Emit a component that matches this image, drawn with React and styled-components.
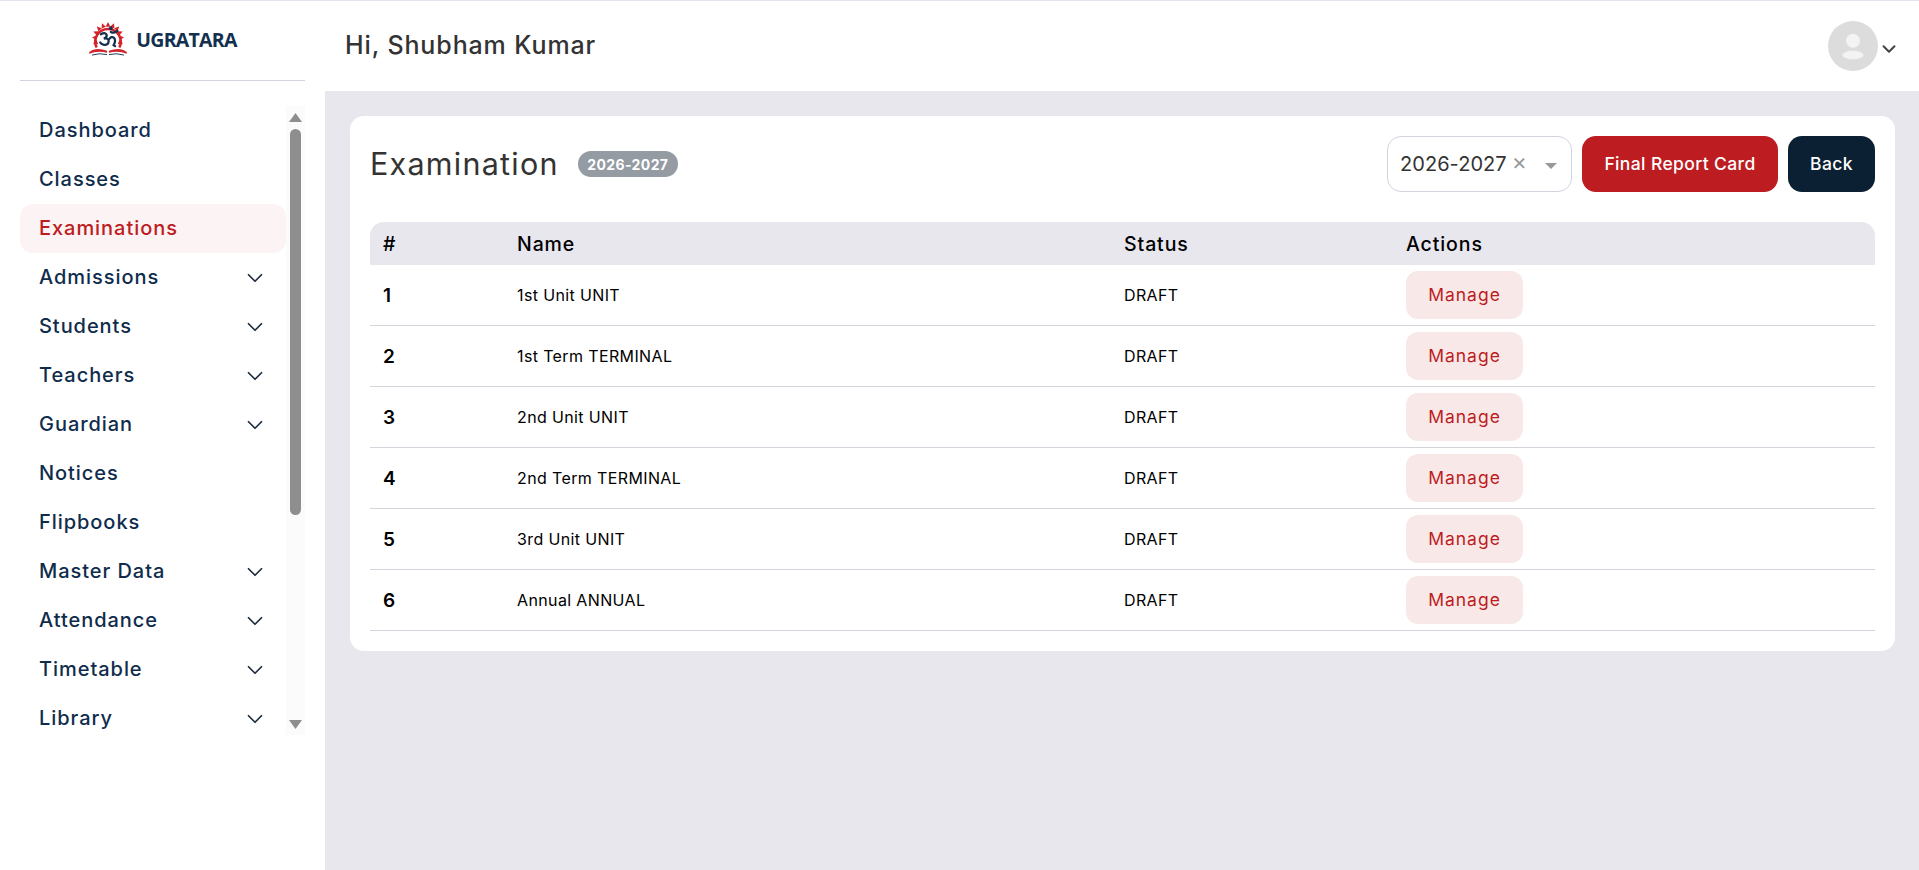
import React from "react";
import styled, { createGlobalStyle } from "styled-components";
import { ChevronDown } from "lucide-react";

const FONT = `"Inter", "Liberation Sans", sans-serif`;

const Global = createGlobalStyle`
  html, body { margin: 0; padding: 0; height: 100%; background: #e8e7ee; }
  * { box-sizing: border-box; }
  body { font-family: ${FONT}; overflow: hidden; }
  #root { height: 100%; }
`;

const Page = styled.div`
  display: flex;
  height: 870px;
  width: 1919px;
  border-top: 1px solid #e3e5ee;
`;

const Sidebar = styled.aside`
  width: 325px;
  flex: none;
  background: #fff;
  padding: 0 20px;
  display: flex;
  flex-direction: column;
`;

const Brand = styled.div`
  height: 80px;
  border-bottom: 1px solid #d3d3e0;
  display: flex;
  align-items: center;
  justify-content: center;
  gap: 8px;
  padding-bottom: 3px;
  flex: none;
`;

const BrandName = styled.span`
  font-family: "Open Sans", sans-serif;
  font-weight: 700;
  font-size: 19.5px;
  letter-spacing: -0.75px;
  color: #14304f;
`;

const NavWrap = styled.div`
  margin-top: 25px;
  height: 629px;
  display: flex;
  flex: none;
`;

const Nav = styled.nav`
  width: 266px;
  flex: none;
  overflow: hidden;
`;

const NavItem = styled.div`
  height: 49px;
  display: flex;
  align-items: center;
  justify-content: space-between;
  padding: 0 18px 2px 19px;
  border-radius: 13px;
  font-size: 20px;
  font-weight: 500;
  letter-spacing: 0.95px;
  color: ${(p) => (p.$active ? "#bd1c21" : "#0f2c4c")};
  background: ${(p) => (p.$active ? "#fcf3f4" : "transparent")};
  svg { color: #1d2c3e; margin-top: 2px; }
`;

const Scrollbar = styled.div`
  width: 19px;
  flex: none;
  background: #fbfbfb;
  display: flex;
  flex-direction: column;
  align-items: center;
`;

const ScrollArrow = styled.svg`
  width: 13px;
  height: 9px;
  flex: none;
  margin: ${(p) => p.$margin};
  fill: #8e8e8e;
`;

const ScrollThumb = styled.div`
  width: 11px;
  height: 386px;
  background: #8e8e8e;
  border-radius: 6px;
  flex: none;
`;

const Main = styled.div`
  flex: 1;
  min-width: 0;
  display: flex;
  flex-direction: column;
`;

const Header = styled.header`
  height: 90px;
  flex: none;
  background: #fff;
  display: flex;
  align-items: center;
  justify-content: space-between;
  padding: 0 19px 0 20px;
`;

const Greeting = styled.h2`
  margin: 0;
  font-size: 25px;
  font-weight: 500;
  letter-spacing: 0.88px;
  color: #333;
  padding-bottom: 2px;
`;

const UserMenu = styled.div`
  display: flex;
  align-items: center;
  color: #444;
  svg:last-child { margin-top: 5px; }
`;

const Content = styled.main`
  flex: 1;
  padding: 25px 24px 25px 25px;
`;

const Card = styled.section`
  background: #fff;
  border-radius: 14px;
  padding: 20px;
`;

const CardTop = styled.div`
  display: flex;
  align-items: center;
  justify-content: space-between;
  height: 56px;
  margin-bottom: 30px;
`;

const TitleGroup = styled.div`
  display: flex;
  align-items: center;
  gap: 19px;
`;

const Title = styled.h1`
  margin: 0;
  font-size: 30.5px;
  font-weight: 400;
  letter-spacing: 1.25px;
  color: #333;
  padding-bottom: 2px;
`;

const Badge = styled.span`
  display: inline-flex;
  align-items: center;
  justify-content: center;
  width: 100px;
  height: 26px;
  border-radius: 13px;
  background: #949ba3;
  color: #fff;
  font-size: 14px;
  font-weight: 700;
  letter-spacing: 0.4px;
`;

const Actions = styled.div`
  display: flex;
  align-items: center;
  gap: 10px;
`;

const YearSelect = styled.div`
  width: 185px;
  height: 56px;
  border: 1px solid #d3d3e0;
  border-radius: 14px;
  display: flex;
  align-items: center;
  padding: 0 14px 0 12px;
  font-size: 20px;
  letter-spacing: 0.05px;
  color: #333;
`;

const ClearMark = styled.span`
  margin-left: 5px;
  color: #999;
  font-size: 23px;
  line-height: 1;
  padding-bottom: 3px;
`;

const Caret = styled.span`
  margin-left: auto;
  width: 0;
  height: 0;
  border-left: 6px solid transparent;
  border-right: 6px solid transparent;
  border-top: 6px solid #999;
  margin-top: 3px;
`;

const Button = styled.button`
  height: 56px;
  width: ${(p) => p.$w}px;
  border: 0;
  border-radius: 14px;
  background: ${(p) => p.$bg};
  color: #fff;
  font-family: ${FONT};
  font-size: 17.5px;
  font-weight: 500;
  letter-spacing: 0.38px;
  padding: 0 0 1px;
`;

const Table = styled.table`
  width: 100%;
  border-collapse: separate;
  border-spacing: 0;
  table-layout: fixed;
  color: #000;
`;

const Th = styled.th`
  height: 43px;
  background: #e8e7ee;
  text-align: left;
  padding: 0 13px;
  font-size: 19.5px;
  font-weight: 500;
  letter-spacing: 0.9px;
  width: ${(p) => p.$w || "auto"};
  &:first-child { border-top-left-radius: 14px; }
  &:last-child { border-top-right-radius: 14px; }
`;

const Td = styled.td`
  height: 61px;
  padding: 0 13px;
  border-bottom: 1px solid #d3d3dc;
  font-size: ${(p) => (p.$index ? "19px" : "16px")};
  letter-spacing: 0.37px;
  font-weight: ${(p) => (p.$index ? 600 : 400)};
`;

const ManageButton = styled.button`
  display: block;
  width: 117px;
  height: 48px;
  border: 0;
  border-radius: 12px;
  background: #f8e8e8;
  color: #bd1c21;
  font-family: ${FONT};
  font-size: 17.5px;
  letter-spacing: 1px;
  padding: 0 0 1px;
`;

const Logo = () => (
  <svg width="40" height="34" viewBox="0 0 42 36" fill="none">
    <g fill="#d2232a">
      {[-112, -90, -68, -46, -24, -2, 20, -134, -156, -178, 160].map((a) => (
        <polygon key={a} points="18.5,5 23.5,5 21,0" transform={`rotate(${a + 90} 21 17)`} />
      ))}
    </g>
    <path d="M9 27 A 13.5 13.5 0 1 1 33 27" stroke="#d2232a" strokeWidth="2.6" />
    <path
      d="M13.5 13 q4.5-2.5 6 .5 q.7 3-3 4 q5.2-.8 5.2 3 q-.4 4.6-5.7 3.4 q-2.2-.5-3.2-2.2 M22 18.5 q2.5-4 5.5-1.6 q2.2 3.2-.5 7.6 l1.5 1 M24 10.5 q3.5 2 7-1"
      stroke="#14304f"
      strokeWidth="2.4"
      strokeLinecap="round"
    />
    <circle cx="24" cy="6.5" r="2" fill="#14304f" />
    <path d="M1 32 Q8 26 20 30.5 L20 32.5 Q10 30 1 33.5 Z M41 32 Q34 26 22 30.5 L22 32.5 Q32 30 41 33.5 Z" fill="#d2232a" />
    <path d="M4 35 Q12 32.5 20 34.5 M38 35 Q30 32.5 22 34.5" stroke="#14304f" strokeWidth="1" />
  </svg>
);

const Avatar = () => (
  <svg width="50" height="50" viewBox="0 0 50 50">
    <circle cx="25" cy="25" r="25" fill="#dcdcdc" />
    <circle cx="25" cy="19.7" r="7" fill="#f3f3f3" />
    <ellipse cx="25" cy="34" rx="10.5" ry="4.3" fill="#f3f3f3" />
  </svg>
);

const menu = [
  ["Dashboard"],
  ["Classes"],
  ["Examinations", false, true],
  ["Admissions", true],
  ["Students", true],
  ["Teachers", true],
  ["Guardian", true],
  ["Notices"],
  ["Flipbooks"],
  ["Master Data", true],
  ["Attendance", true],
  ["Timetable", true],
  ["Library", true],
];

const exams = ["1st Unit UNIT", "1st Term TERMINAL", "2nd Unit UNIT", "2nd Term TERMINAL", "3rd Unit UNIT", "Annual ANNUAL"];

export default function App() {
  return (
    <>
      <Global />
      <Page>
        <Sidebar>
          <Brand>
            <Logo />
            <BrandName>UGRATARA</BrandName>
          </Brand>
          <NavWrap>
            <Nav>
              {menu.map(([label, sub, active]) => (
                <NavItem key={label} $active={active}>
                  {label}
                  {sub && <ChevronDown size={26} strokeWidth={1.6} />}
                </NavItem>
              ))}
            </Nav>
            <Scrollbar>
              <ScrollArrow $margin="7px 0 7px" viewBox="0 0 13 9"><polygon points="6.5,0 13,9 0,9" /></ScrollArrow>
              <ScrollThumb />
              <ScrollArrow $margin="auto 0 6px" viewBox="0 0 13 9"><polygon points="0,0 13,0 6.5,9" /></ScrollArrow>
            </Scrollbar>
          </NavWrap>
        </Sidebar>
        <Main>
          <Header>
            <Greeting>Hi, Shubham Kumar</Greeting>
            <UserMenu>
              <Avatar />
              <ChevronDown size={22} strokeWidth={2.2} />
            </UserMenu>
          </Header>
          <Content>
            <Card>
              <CardTop>
                <TitleGroup>
                  <Title>Examination</Title>
                  <Badge>2026-2027</Badge>
                </TitleGroup>
                <Actions>
                  <YearSelect>
                    2026-2027
                    <ClearMark>×</ClearMark>
                    <Caret />
                  </YearSelect>
                  <Button $w={196} $bg="#bd1c21">Final Report Card</Button>
                  <Button $w={87} $bg="#0c2034">Back</Button>
                </Actions>
              </CardTop>
              <Table>
                <thead>
                  <tr>
                    <Th $w="134px">#</Th>
                    <Th $w="607px">Name</Th>
                    <Th $w="282px">Status</Th>
                    <Th>Actions</Th>
                  </tr>
                </thead>
                <tbody>
                  {exams.map((name, i) => (
                    <tr key={name}>
                      <Td $index>{i + 1}</Td>
                      <Td>{name}</Td>
                      <Td>DRAFT</Td>
                      <Td><ManageButton>Manage</ManageButton></Td>
                    </tr>
                  ))}
                </tbody>
              </Table>
            </Card>
          </Content>
        </Main>
      </Page>
    </>
  );
}
